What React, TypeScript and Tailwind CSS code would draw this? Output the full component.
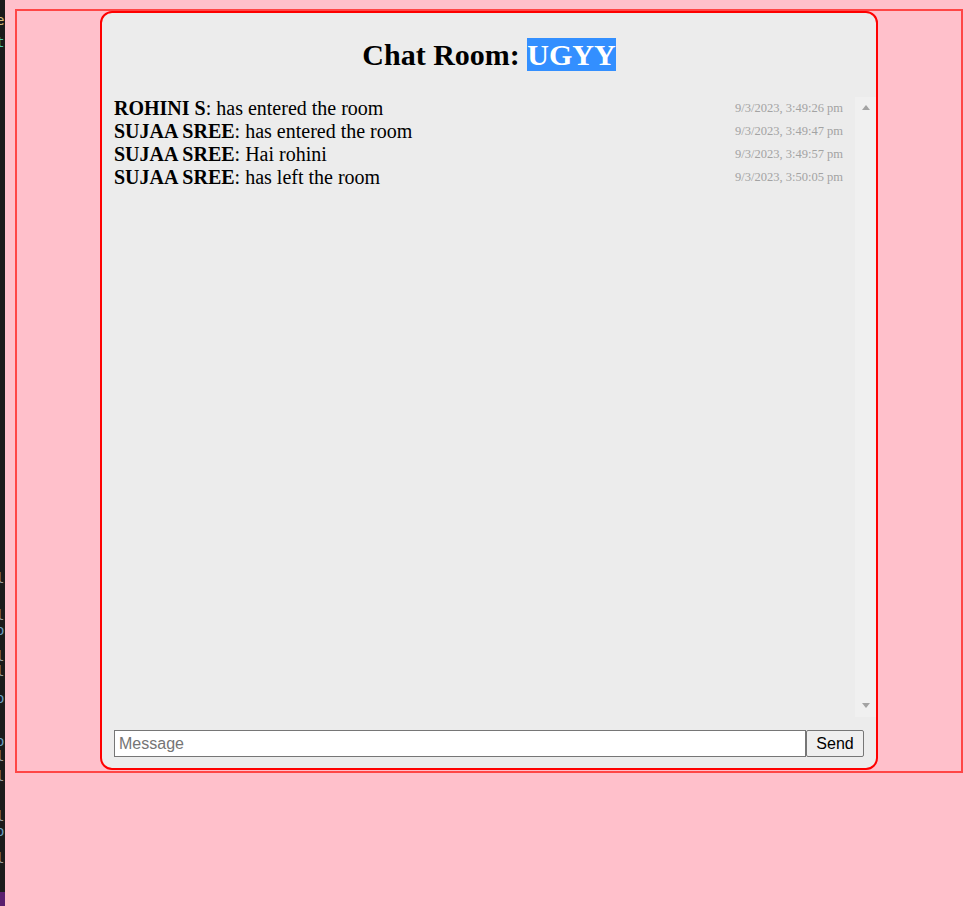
const messages = [
  { user: "ROHINI S", text: "has entered the room", time: "9/3/2023, 3:49:26 pm" },
  { user: "SUJAA SREE", text: "has entered the room", time: "9/3/2023, 3:49:47 pm" },
  { user: "SUJAA SREE", text: "Hai rohini", time: "9/3/2023, 3:49:57 pm" },
  { user: "SUJAA SREE", text: "has left the room", time: "9/3/2023, 3:50:05 pm" },
];

// bits of the editor window peeking in on the left edge
const editorGlyphs: { top: number; ch: string; color: string }[] = [
  { top: 12, ch: "e", color: "text-[#d7ba7d]" },
  { top: 34, ch: "t", color: "text-[#4ec9b0]" },
  { top: 570, ch: "l", color: "text-[#9d9d9d]" },
  { top: 607, ch: "l", color: "text-[#9d9d9d]" },
  { top: 622, ch: "o", color: "text-[#6a9fc0]" },
  { top: 648, ch: "l", color: "text-[#9d9d9d]" },
  { top: 663, ch: "l", color: "text-[#9d9d9d]" },
  { top: 690, ch: "o", color: "text-[#6a9fc0]" },
  { top: 733, ch: "o", color: "text-[#6a9fc0]" },
  { top: 748, ch: "l", color: "text-[#9d9d9d]" },
  { top: 768, ch: "l", color: "text-[#9d9d9d]" },
  { top: 808, ch: "l", color: "text-[#9d9d9d]" },
  { top: 823, ch: "o", color: "text-[#6a9fc0]" },
  { top: 850, ch: "l", color: "text-[#9d9d9d]" },
];

const EditorStrip = () => (
  <div className="relative w-[5px] shrink-0 overflow-hidden bg-[#1b1b1b] font-['DejaVu_Sans_Mono',monospace] text-[14px] leading-[16px]">
    {editorGlyphs.map((g, i) => (
      <span key={i} className={`absolute left-[-4px] ${g.color}`} style={{ top: g.top }}>
        {g.ch}
      </span>
    ))}
    <div className="absolute bottom-0 left-0 h-[14px] w-full bg-[#5a1e6e]" />
  </div>
);

const Scrollbar = () => (
  <div className="flex w-[21px] shrink-0 flex-col items-center justify-between bg-[#f0f0f0] pt-[8px] pb-[9px]">
    <div className="h-0 w-0 border-x-[4px] border-b-[5px] border-x-transparent border-b-[#a3a3a3]" />
    <div className="h-0 w-0 border-x-[4px] border-t-[5px] border-x-transparent border-t-[#a3a3a3]" />
  </div>
);

const App = () => {
  return (
    <div className="flex min-h-[906px] bg-[#ffc0cb]">
      <EditorStrip />
      <div className="flex-1">
        <div className="ml-[10px] mt-[9px] flex h-[764px] w-[948px] justify-center border-2 border-[#ff4646]">
          <div className="flex h-[759px] w-[778px] flex-col rounded-[12px] border-2 border-[#ff0000] bg-[#ececec]">
            <h1 className="mt-[24px] text-center font-['Liberation_Serif',serif] text-[30px] font-bold leading-[35px] text-black">
              Chat Room: <span className="bg-[#338fff] text-white">UGYY</span>
            </h1>

            <div className="ml-3 mt-[25px] flex h-[620px]">
              <div className="flex-1 pr-3 font-['Liberation_Serif',serif]">
                {messages.map((m, i) => (
                  <div key={i} className="flex h-[23px] items-center justify-between">
                    <p className="text-[20px] leading-[23px] text-black">
                      <span className="font-bold">{m.user}</span>: {m.text}
                    </p>
                    <span className="text-[12.5px] text-[#a3a3a3]">{m.time}</span>
                  </div>
                ))}
              </div>
              <Scrollbar />
            </div>

            <form className="mx-3 mt-[13px] flex h-[27px]" onSubmit={(e) => e.preventDefault()}>
              <input
                type="text"
                placeholder="Message"
                className="h-full flex-1 border border-[#767676] bg-white px-[4px] font-['Liberation_Sans',sans-serif] text-[16px] text-black placeholder:text-[#757575] outline-none"
              />
              <button
                type="submit"
                className="h-full w-[58px] rounded-[2px] border border-[#767676] bg-[#efefef] font-['Liberation_Sans',sans-serif] text-[16px] text-black"
              >
                Send
              </button>
            </form>
          </div>
        </div>
      </div>
    </div>
  );
};

export default App;
